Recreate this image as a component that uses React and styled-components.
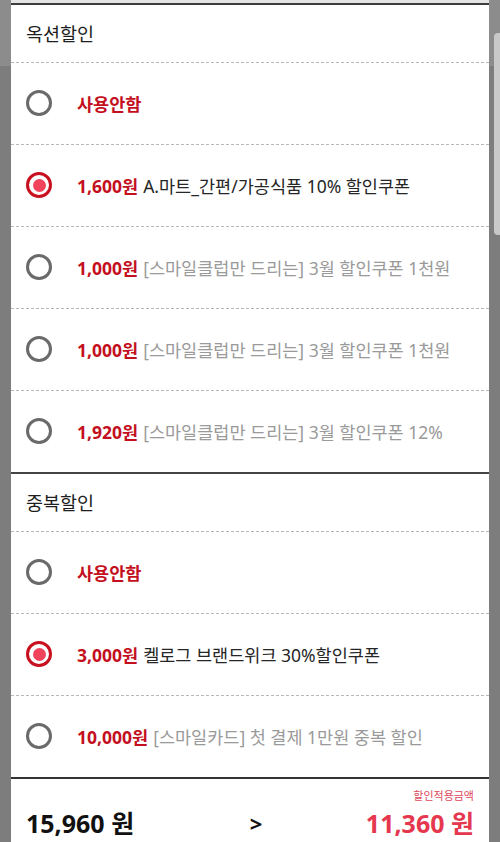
import React from "react";
import styled, { createGlobalStyle } from "styled-components";

const GlobalStyle = createGlobalStyle`
  html, body {
    margin: 0;
    padding: 0;
    background: #808080;
  }
  body {
    font-family: "Noto Sans", "Noto Sans CJK KR", sans-serif;
  }
`;

const Backdrop = styled.div`
  display: flex;
  height: 842px;
  overflow: hidden;
  background: linear-gradient(#8c8c8c 0 66px, #7d7d7d 66px 100%);
`;

const Gutter = styled.div`
  width: 11px;
  flex-shrink: 0;
  position: relative;
`;

const ScrollThumb = styled.div`
  position: absolute;
  left: 5px;
  top: 33px;
  width: 8px;
  height: 202px;
  border-radius: 4px 0 0 4px;
  background: #c9c9c9;
`;

const Panel = styled.div`
  flex: 1;
  background: #fff;
  display: flex;
  flex-direction: column;
`;

const TopRule = styled.div`
  height: 3px;
  background: #e4e4e4;
  border-bottom: 2px solid #3d3d3d;
`;

const Section = styled.section`
  display: flex;
  flex-direction: column;
  & + & {
    border-top: 2px solid #444;
  }
`;

const SectionTitle = styled.div`
  height: 57px;
  display: flex;
  align-items: center;
  padding-left: 15px;
  font-size: 18.5px;
  color: #1e1e1e;
`;

const Row = styled.div`
  height: 81px;
  display: flex;
  align-items: center;
  padding-left: 15px;
  border-top: 1px dashed #b8b8b8;
`;

const Radio = styled.span`
  width: 26px;
  height: 26px;
  box-sizing: border-box;
  border-radius: 50%;
  border: 3px solid ${(p) => (p.$checked ? "#c8101f" : "#6a6a6a")};
  display: flex;
  align-items: center;
  justify-content: center;
  flex-shrink: 0;
  margin-right: 25px;

  &::after {
    content: "";
    display: ${(p) => (p.$checked ? "block" : "none")};
    width: 13px;
    height: 13px;
    border-radius: 50%;
    background: #f0435c;
  }
`;

const Label = styled.div`
  font-size: 17.5px;
  white-space: nowrap;
  color: ${(p) => (p.$checked ? "#262626" : "#9a9a9a")};
`;

const Amount = styled.span`
  color: #c4101e;
  font-weight: 700;
  margin-right: 5px;
`;

const Footer = styled.div`
  border-top: 2px solid #333;
  display: grid;
  grid-template-columns: 1fr auto 1fr;
  align-items: end;
  padding: 0 15px 0 15px;
  height: 64px;
`;

const Total = styled.div`
  font-size: 25px;
  font-weight: 700;
  color: #111;
  padding-bottom: 2px;
`;

const Arrow = styled.div`
  font-size: 22px;
  font-weight: 700;
  color: #111;
  padding-bottom: 4px;
  margin-left: 12px;
`;

const Result = styled.div`
  display: flex;
  flex-direction: column;
  align-items: flex-end;
`;

const ResultLabel = styled.div`
  font-size: 11px;
  color: #e0495c;
  margin-bottom: 1px;
`;

const ResultValue = styled.div`
  font-size: 25px;
  font-weight: 700;
  color: #e5384f;
  padding-bottom: 2px;
`;

const auctionCoupons = [
  { amount: "", text: "사용안함", none: true },
  { amount: "1,600원", text: "A.마트_간편/가공식품 10% 할인쿠폰", checked: true },
  { amount: "1,000원", text: "[스마일클럽만 드리는] 3월 할인쿠폰 1천원" },
  { amount: "1,000원", text: "[스마일클럽만 드리는] 3월 할인쿠폰 1천원" },
  { amount: "1,920원", text: "[스마일클럽만 드리는] 3월 할인쿠폰 12%" },
];

const dupCoupons = [
  { amount: "", text: "사용안함", none: true },
  { amount: "3,000원", text: "켈로그 브랜드위크 30%할인쿠폰", checked: true },
  { amount: "10,000원", text: "[스마일카드] 첫 결제 1만원 중복 할인" },
];

const CouponRow = ({ item }) => (
  <Row>
    <Radio $checked={item.checked} />
    {item.none ? (
      <Label>
        <Amount>{item.text}</Amount>
      </Label>
    ) : (
      <Label $checked={item.checked}>
        <Amount>{item.amount}</Amount>
        {item.text}
      </Label>
    )}
  </Row>
);

export default function App() {
  return (
    <>
      <GlobalStyle />
      <Backdrop>
        <Gutter />
        <Panel>
          <TopRule />
          <Section>
            <SectionTitle>옥션할인</SectionTitle>
            {auctionCoupons.map((c, i) => (
              <CouponRow key={i} item={c} />
            ))}
          </Section>
          <Section>
            <SectionTitle>중복할인</SectionTitle>
            {dupCoupons.map((c, i) => (
              <CouponRow key={i} item={c} />
            ))}
          </Section>
          <Footer>
            <Total>15,960 원</Total>
            <Arrow>&gt;</Arrow>
            <Result>
              <ResultLabel>할인적용금액</ResultLabel>
              <ResultValue>11,360 원</ResultValue>
            </Result>
          </Footer>
        </Panel>
        <Gutter>
          <ScrollThumb />
        </Gutter>
      </Backdrop>
    </>
  );
}
